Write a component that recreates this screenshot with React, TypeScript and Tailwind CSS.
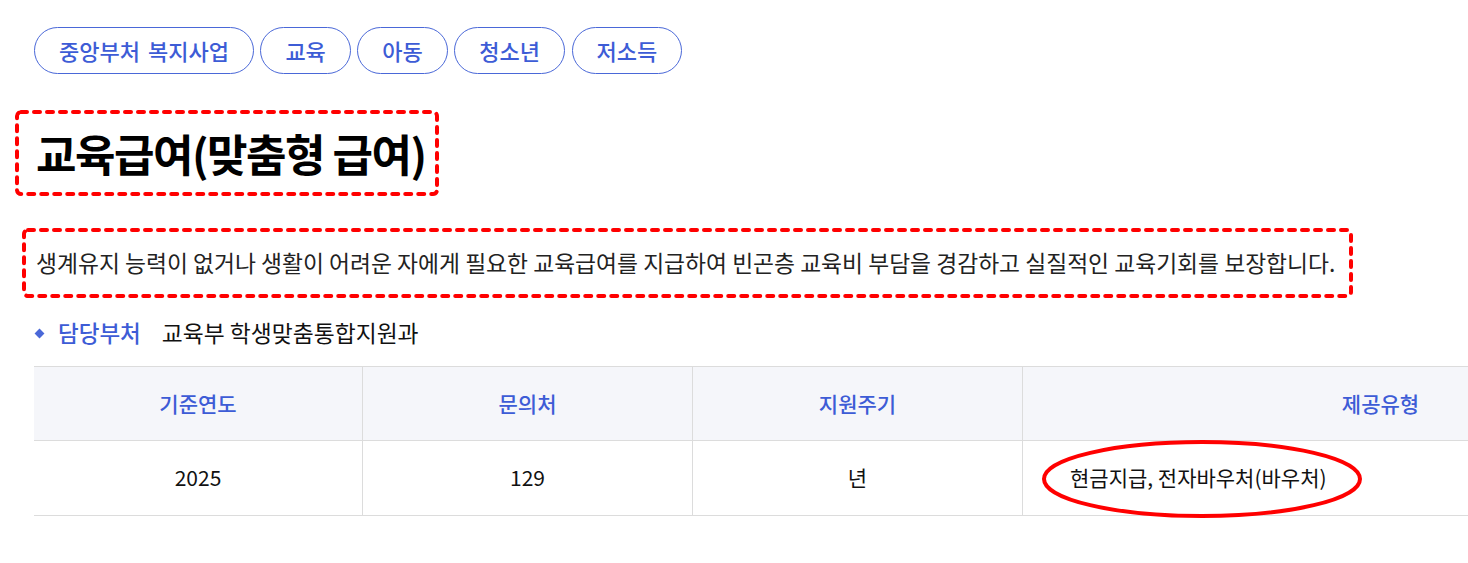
import React from "react";

const font = { fontFamily: '"Noto Sans CJK KR", "Noto Sans", sans-serif' };

function DashedBox({ className, children }: { className: string; children: React.ReactNode }) {
  return (
    <div className={"relative " + className}>
      <svg className="pointer-events-none absolute inset-0 h-full w-full overflow-visible" preserveAspectRatio="none">
        <rect x="2" y="2" rx="4" fill="none" stroke="#ff0000" strokeWidth="4" strokeDasharray="6 7" strokeLinecap="round" style={{ width: "calc(100% - 4px)", height: "calc(100% - 4px)" }} />
      </svg>
      {children}
    </div>
  );
}

export default function App() {
  const tags = ["중앙부처 복지사업", "교육", "아동", "청소년", "저소득"];
  return (
    <div className="h-[563px] w-[1468px] overflow-hidden bg-white" style={font}>
      <div className="pl-[34px] pt-[27px]">
        <div className="flex gap-[6.5px]">
          {tags.map((t) => (
            <div key={t} className="flex h-[47px] items-center rounded-full border border-[#4a68d8] px-[24px] text-[22px] font-medium text-[#3d5cd6] [word-spacing:3px]">
              {t}
            </div>
          ))}
        </div>
      </div>

      <DashedBox className="ml-[15px] mt-[36px] flex h-[86px] w-[424px] items-center pl-[21px]">
        <h1 className="text-[44px] font-bold leading-none tracking-[-1.5px] text-black">교육급여(맞춤형 급여)</h1>
      </DashedBox>

      <DashedBox className="ml-[22px] mt-[32px] flex h-[70px] w-[1331px] items-center pl-[14px]">
        <p className="text-[22.8px] leading-none text-[#222]">
          생계유지 능력이 없거나 생활이 어려운 자에게 필요한 교육급여를 지급하여 빈곤층 교육비 부담을 경감하고 실질적인 교육기회를 보장합니다.
        </p>
      </DashedBox>

      <div className="ml-[36px] mt-[20px] flex h-[30px] items-center">
        <span className="mr-[15px] inline-block h-[7px] w-[7px] rotate-45 bg-[#4a68d8]" />
        <span className="text-[22.5px] font-medium text-[#3d5cd6]">담당부처</span>
        <span className="ml-[21px] text-[22.8px] text-[#111]">교육부 학생맞춤통합지원과</span>
      </div>

      <div className="relative ml-[34px] mt-[18px] w-[1704px]">
        <div className="grid grid-cols-[329px_330px_330px_715px] border-t border-[#dcdcdc] text-[21px]">
          <div className="flex h-[74px] items-center justify-center border-b border-r border-[#dcdcdc] bg-[#f5f6fa] font-medium text-[#3d5cd6]">기준연도</div>
          <div className="flex h-[74px] items-center justify-center border-b border-r border-[#dcdcdc] bg-[#f5f6fa] font-medium text-[#3d5cd6]">문의처</div>
          <div className="flex h-[74px] items-center justify-center border-b border-r border-[#dcdcdc] bg-[#f5f6fa] font-medium text-[#3d5cd6]">지원주기</div>
          <div className="flex h-[74px] items-center justify-center border-b border-[#dcdcdc] bg-[#f5f6fa] font-medium text-[#3d5cd6]">제공유형</div>
          <div className="flex h-[75px] items-center justify-center border-b border-r border-[#dcdcdc] text-[#111]">2025</div>
          <div className="flex h-[75px] items-center justify-center border-b border-r border-[#dcdcdc] text-[#111]">129</div>
          <div className="flex h-[75px] items-center justify-center border-b border-r border-[#dcdcdc] text-[#111]">년</div>
          <div className="flex h-[75px] items-center border-b border-[#dcdcdc] pl-[47px] text-[#111]">현금지급, 전자바우처(바우처)</div>
        </div>
        <svg className="pointer-events-none absolute left-[1006px] top-[72px]" width="324" height="82" viewBox="0 0 324 82">
          <ellipse cx="162" cy="41" rx="158" ry="37" fill="none" stroke="#ff0000" strokeWidth="4" />
        </svg>
      </div>
    </div>
  );
}
